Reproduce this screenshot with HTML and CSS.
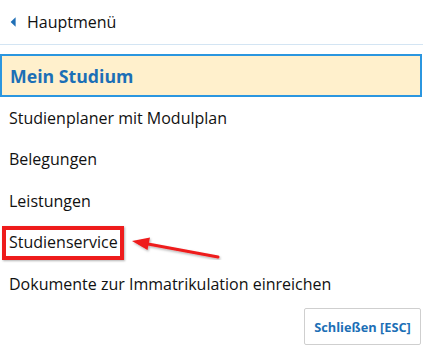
FILE: index.html
```html
<!DOCTYPE html>
<html lang="de">
<head>
<meta charset="utf-8">
<link rel="stylesheet" href="styles.css">
</head>
<body>
<div class="panel">
  <div class="back">
    <svg class="chev" width="6" height="10" viewBox="0 0 6 10"><path d="M5.6 0.3 L0.6 5 L5.6 9.7 Z" fill="#1f6fb6"/></svg>
    <span>Hauptmenü</span>
  </div>
  <div class="current">Mein Studium</div>
  <ul class="items">
    <li>Studienplaner mit Modulplan</li>
    <li>Belegungen</li>
    <li>Leistungen</li>
    <li>Studienservice</li>
    <li>Dokumente zur Immatrikulation einreichen</li>
  </ul>
  <div class="actions">
    <button class="close">Schließen [ESC]</button>
  </div>
  <div class="mark"></div>
  <svg class="arrow" width="100" height="30" viewBox="0 0 100 30">
    <defs>
      <filter id="sh" x="-20%" y="-50%" width="140%" height="200%">
        <feDropShadow dx="1" dy="1.5" stdDeviation="1" flood-color="#000" flood-opacity="0.3"/>
      </filter>
    </defs>
    <g filter="url(#sh)">
      <line x1="88" y1="27" x2="18" y2="14" stroke="#ee1c1c" stroke-width="3" stroke-linecap="round"/>
      <path d="M2 11 L20 7.5 L17.5 20 Z" fill="#ee1c1c"/>
    </g>
  </svg>
</div>
</body>
</html>
```
FILE: styles.css
```css
html, body {
  margin: 0;
  padding: 0;
  background: #fff;
}
body {
  font-family: "Open Sans", "Noto Sans", sans-serif;
  color: #111;
}
.panel {
  position: relative;
  width: 423px;
  height: 355px;
}
.back {
  display: flex;
  align-items: center;
  border-bottom: 1px solid #d4e5f3;
  padding-left: 10px;
  font-size: 16px;
  gap: 11px;
  box-sizing: border-box;
  height: 45px;
  padding-bottom: 1px;
}
.chev {
  display: block;
}
.current {
  margin-top: 9px;
  margin-right: 1px;
  height: 43px;
  box-sizing: border-box;
  border: 2px solid #2b96df;
  background: #fff0cc;
  color: #1c6fb6;
  font-weight: 700;
  font-size: 17.7px;
  display: flex;
  align-items: center;
  padding-left: 8px;
}
.items {
  list-style: none;
  margin: 0;
  padding: 0;
}
.items li {
  height: 41.75px;
  display: flex;
  align-items: center;
  padding-left: 9px;
  font-size: 16px;
}
.items li:first-child {
  height: 41px;
}
.actions {
  display: flex;
  justify-content: flex-end;
  padding-right: 2px;
  margin-top: 3px;
}
.close {
  font-family: "Open Sans", "Noto Sans", sans-serif;
  font-weight: 700;
  font-size: 12.8px;
  color: #1c6fb6;
  background: #fff;
  border: 1px solid #cfcfcf;
  border-radius: 2px;
  width: 117px;
  height: 37px;
  padding: 0;
}
.mark {
  position: absolute;
  left: 2px;
  top: 226px;
  width: 122px;
  height: 34px;
  box-sizing: border-box;
  border: 4.5px solid #ee1c1c;
  box-shadow: 1px 1px 2px rgba(0,0,0,0.3);
}
.arrow {
  position: absolute;
  left: 130px;
  top: 230px;
}
```
